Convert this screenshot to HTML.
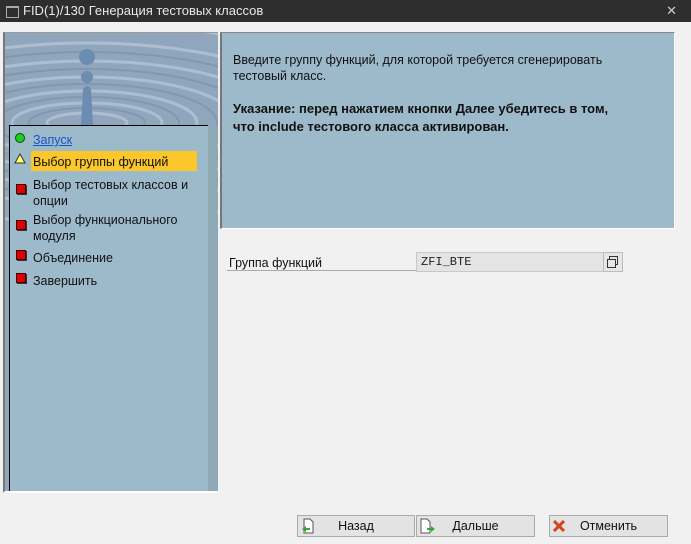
<!DOCTYPE html>
<html><head><meta charset="utf-8"><style>
body{margin:0;width:691px;height:544px;background:#f1f1f1;font-family:"Liberation Sans",sans-serif;font-size:12px;position:relative;overflow:hidden}
.a{position:absolute}
.title{left:0;top:0;width:691px;height:22px;background:#2e2e2e;color:#e8e8e8;font-size:13px;line-height:22px}
.lp{left:3px;top:32px;width:213px;height:458px;background:#90a6bd;border-left:2px solid #777;border-top:1px solid #999;border-bottom:2px solid #fff;overflow:hidden}
.inner{left:9px;top:125px;width:198px;height:365px;background:#9dbacb;border-left:1px solid #000;border-top:1px solid #000}
.it{position:absolute;left:23px;font-size:12.5px;color:#111;line-height:16px}
.ic{position:absolute;left:6px;width:8px;height:8px;background:#d00;border:1px solid #400;box-shadow:1px 1px 0 #333}
.rp{left:220px;top:32px;width:452px;height:195px;background:#9dbacb;border-left:2px solid #777;border-top:1px solid #888;border-bottom:1px solid #fff;border-right:1px solid #fff;color:#111;font-size:12.5px}
.btn{top:515px;height:20px;background:#e3e3e3;border:1px solid #aaa;font-size:12.5px;line-height:20px;text-align:center;color:#111}
</style></head><body>
<div class="a title"><span style="position:absolute;left:6px;top:6px;width:11px;height:9px;border:1px solid #aaa;border-top-width:2px"></span><span style="position:absolute;left:23px">FID(1)/130 Генерация тестовых классов</span><span style="position:absolute;right:14px;color:#ccc">✕</span></div>
<div class="a lp">
<svg width="213" height="460" style="position:absolute;left:0;top:0">
<g fill="none" stroke="#b4c4d6" stroke-width="3" opacity="0.8">
<ellipse cx="82" cy="90" rx="40" ry="10"/>
<ellipse cx="82" cy="90" rx="75" ry="20"/>
<ellipse cx="82" cy="90" rx="110" ry="32"/>
<ellipse cx="82" cy="90" rx="150" ry="46"/>
<ellipse cx="82" cy="90" rx="195" ry="62"/>
<ellipse cx="82" cy="90" rx="240" ry="80"/>
<ellipse cx="82" cy="90" rx="290" ry="100"/>
</g>
<g fill="none" stroke="#7d93ad" stroke-width="2" opacity="0.7">
<ellipse cx="82" cy="90" rx="58" ry="15"/>
<ellipse cx="82" cy="90" rx="92" ry="26"/>
<ellipse cx="82" cy="90" rx="130" ry="39"/>
<ellipse cx="82" cy="90" rx="172" ry="54"/>
<ellipse cx="82" cy="90" rx="218" ry="71"/>
</g>
<circle cx="82" cy="24" r="8" fill="#6c8cb2"/><circle cx="82" cy="44" r="6" fill="#6c8cb2"/>
<path d="M78 56 Q82 50 86 56 L88 92 L76 92Z" fill="#6c8cb2"/>
</svg>
</div>
<div class="a inner">
<div style="position:absolute;left:5px;top:7px;width:8px;height:8px;border-radius:50%;background:#2c2;border:1px solid #050"></div>
<div class="it" style="top:6px;left:23px;color:#1a55c8;text-decoration:underline">Запуск</div>
<div style="position:absolute;left:21px;top:25px;width:166px;height:20px;background:#fcc72a"></div>
<svg style="position:absolute;left:4px;top:27px" width="12" height="11"><path d="M6 1 L11 10 L1 10Z" fill="#ff6" stroke="#333"/></svg>
<div class="it" style="top:28px">Выбор группы функций</div>
<div class="ic" style="top:58px"></div><div class="it" style="top:51px">Выбор тестовых классов и<br>опции</div>
<div class="ic" style="top:94px"></div><div class="it" style="top:86px">Выбор функционального<br>модуля</div>
<div class="ic" style="top:124px"></div><div class="it" style="top:124px">Объединение</div>
<div class="ic" style="top:147px"></div><div class="it" style="top:147px">Завершить</div>
</div>
<div class="a" style="left:208px;top:125px;width:9px;height:365px;background:#8ea8b6"></div>
<div class="a rp">
<div style="position:absolute;left:11px;top:19px;line-height:16px">Введите группу функций, для которой требуется сгенерировать<br>тестовый класс.</div>
<div style="position:absolute;left:11px;top:67px;line-height:18px;font-weight:bold;font-size:13px">Указание: перед нажатием кнопки Далее убедитесь в том,<br>что include тестового класса активирован.</div>
</div>
<div class="a" style="left:229px;top:256px;font-size:12.5px;color:#111">Группа функций</div>
<div class="a" style="left:227px;top:270px;width:189px;height:1px;background:#aaa"></div>
<div class="a" style="left:416px;top:252px;width:186px;height:18px;background:#e4e4e4;border:1px solid #c8c8c8;font-family:'Liberation Mono',monospace;font-size:12px;line-height:18px;color:#222"><span style="margin-left:4px">ZFI_BTE</span></div>
<div class="a" style="left:603px;top:252px;width:18px;height:18px;background:#e6e6e6;border:1px solid #bbb"><div style="position:absolute;left:5px;top:3px;width:7px;height:7px;border:1px solid #333"></div><div style="position:absolute;left:3px;top:6px;width:7px;height:7px;border:1px solid #333;background:#e6e6e6"></div></div>
<div class="a btn" style="left:297px;width:116px">Назад<svg style="position:absolute;left:3px;top:2px" width="14" height="16"><path d="M3 1h6l3 3v11H3z" fill="#fff" stroke="#555"/><path d="M1 11l4-3v2h4v2H5v2z" fill="#3a3"/></svg></div>
<div class="a btn" style="left:416px;width:117px">Дальше<svg style="position:absolute;left:3px;top:2px" width="16" height="16"><path d="M1 1h6l3 3v11H1z" fill="#fff" stroke="#555"/><path d="M15 11l-4-3v2H7v2h4v2z" fill="#3a3"/></svg></div>
<div class="a btn" style="left:549px;width:117px">Отменить<svg style="position:absolute;left:3px;top:4px" width="12" height="12"><path d="M1 1L11 11M11 1L1 11" stroke="#d4451a" stroke-width="3"/></svg></div>
</body></html>
